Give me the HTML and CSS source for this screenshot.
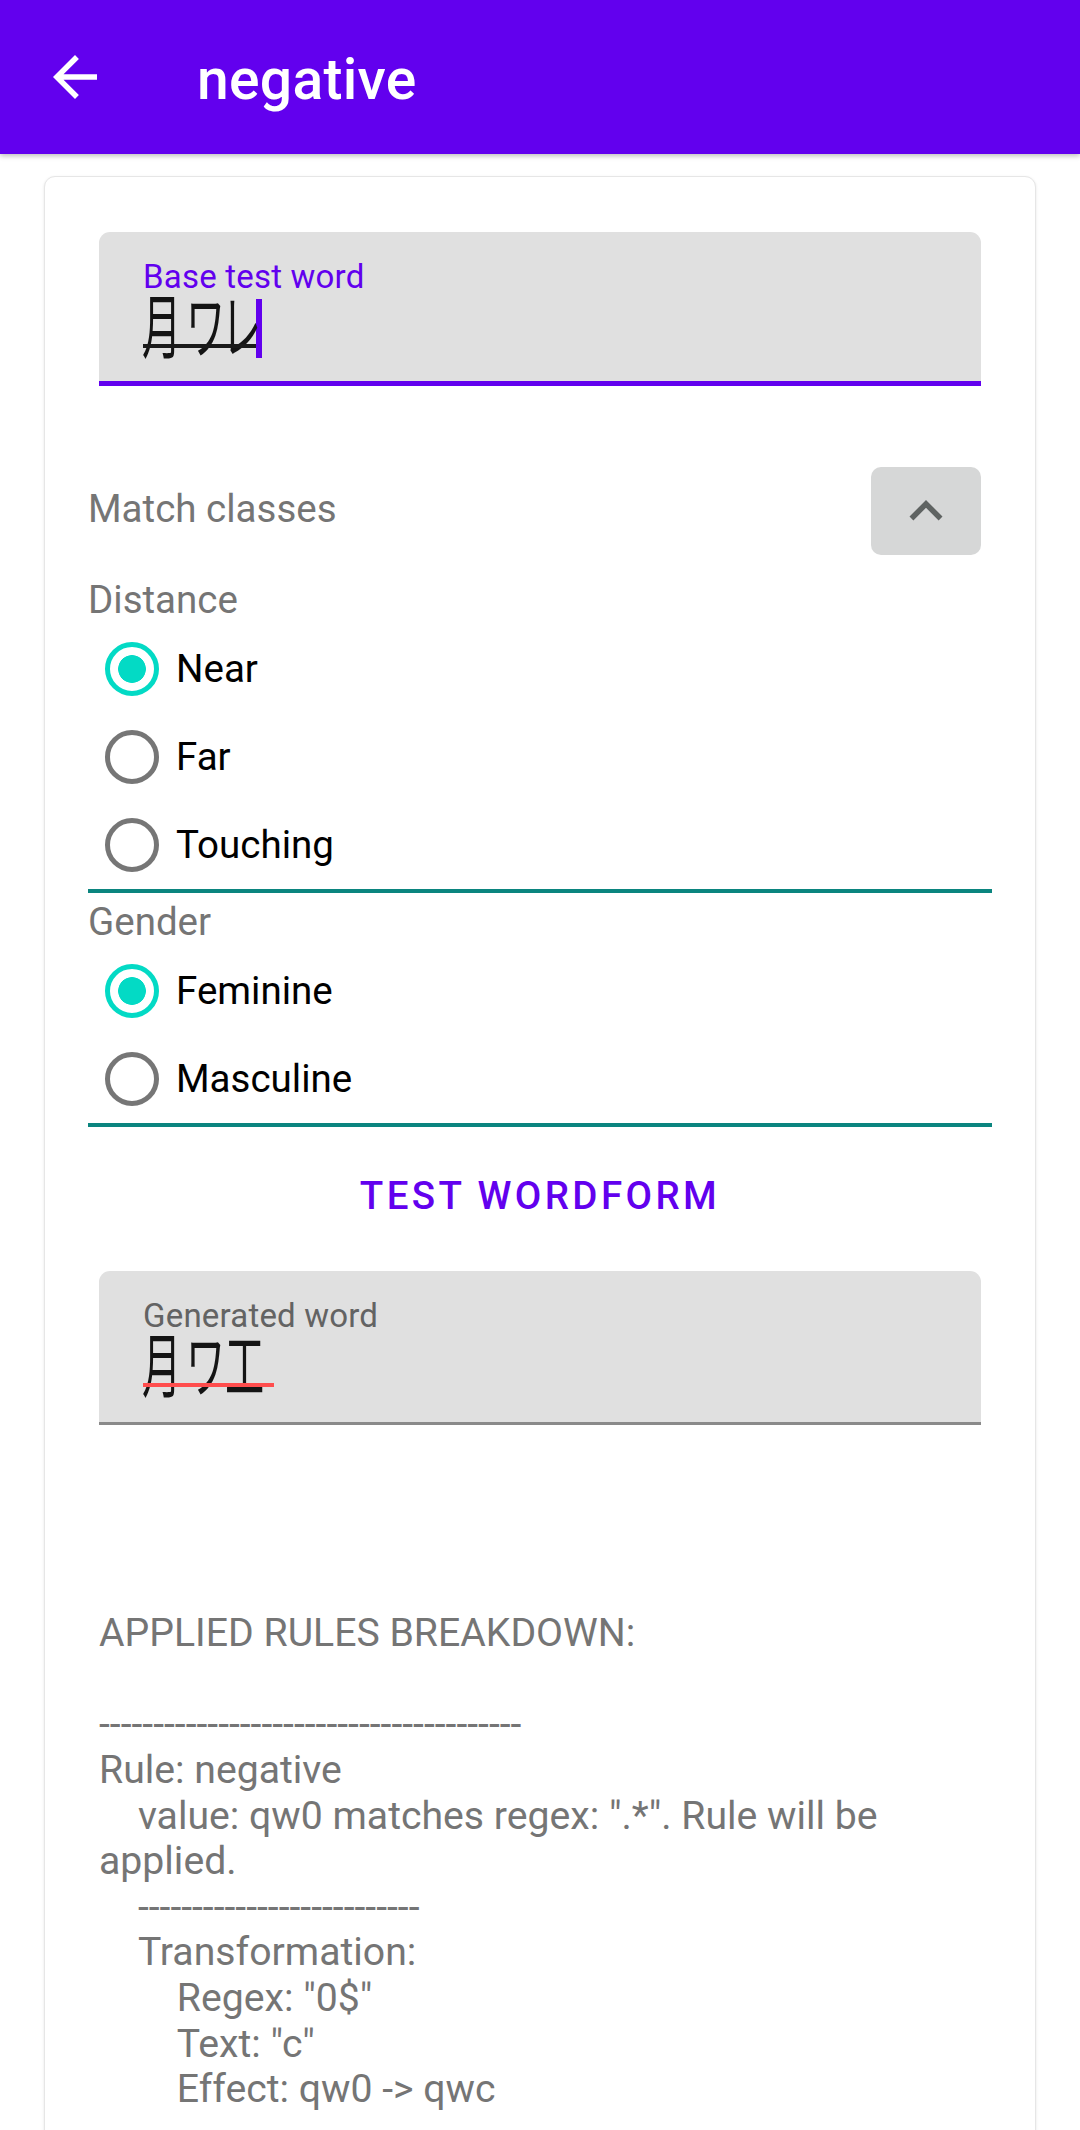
FILE: index.html
```html
<!DOCTYPE html>
<html lang="en">
<head>
<meta charset="utf-8">
<title>negative</title>
<link rel="stylesheet" href="styles.css">
</head>
<body>
<header class="appbar">
  <svg class="back" viewBox="0 0 24 24" aria-hidden="true"><path d="M20 11H7.83l5.59-5.59L12 4l-8 8 8 8 1.41-1.41L7.83 13H20v-2z"/></svg>
  <h1 class="title">negative</h1>
</header>

<main class="card">
  <div class="field field-focused">
    <div class="field-label">Base test word</div>
    <div class="field-value">
      <span class="word word-composing"><span class="g g1">月</span><span class="g g2">ワ</span><span class="g g3">レ</span></span><span class="cursor"></span>
    </div>
  </div>

  <div class="match-row">
    <span class="match-label">Match classes</span>
    <button class="expand" type="button" aria-label="Collapse"><svg viewBox="0 0 24 24"><path d="M12 8l-6 6 1.41 1.41L12 10.83l4.59 4.58L18 14z"/></svg></button>
  </div>

  <div class="group-label group-label-first">Distance</div>
  <div class="radio-group">
    <div class="radio checked"><span class="radio-circle"></span><span class="radio-text">Near</span></div>
    <div class="radio"><span class="radio-circle"></span><span class="radio-text">Far</span></div>
    <div class="radio"><span class="radio-circle"></span><span class="radio-text">Touching</span></div>
  </div>

  <div class="group-label">Gender</div>
  <div class="radio-group">
    <div class="radio checked"><span class="radio-circle"></span><span class="radio-text">Feminine</span></div>
    <div class="radio"><span class="radio-circle"></span><span class="radio-text">Masculine</span></div>
  </div>

  <button class="test-btn" type="button">TEST WORDFORM</button>

  <div class="field field-idle">
    <div class="field-label">Generated word</div>
    <div class="field-value">
      <span class="word word-misspelled"><span class="g g1">月</span><span class="g g2">ワ</span><span class="g g4">工</span></span>
    </div>
  </div>

  <div class="breakdown">APPLIED RULES BREAKDOWN:

---------------------------------------
Rule: negative
    value: qw0 matches regex: ".*". Rule will be applied.
    --------------------------
    Transformation:
        Regex: "0$"
        Text: "c"
        Effect: qw0 -&gt; qwc</div>
</main>
</body>
</html>
```

FILE: styles.css
```css
*, *::before, *::after {
  box-sizing: border-box;
}

html, body {
  margin: 0;
  background: #ffffff;
}

body {
  font-family: Roboto, "Noto Sans", "Liberation Sans", sans-serif;
  overflow: hidden;
}

/* ---------- app bar ---------- */
.appbar {
  position: relative;
  z-index: 1;
  height: 154px;
  background: #6200ee;
  display: flex;
  align-items: center;
  padding-top: 5px;
  padding-left: 42px;
  box-shadow: 0 2px 5px rgba(0, 0, 0, 0.26);
}

.back {
  width: 66px;
  height: 66px;
  fill: #ffffff;
  flex: none;
  margin-top: -5px;
}

.title {
  margin: 0 0 0 89px;
  font-size: 57px;
  font-weight: 500;
  color: #ffffff;
  letter-spacing: 0.3px;
}

/* ---------- card ---------- */
.card {
  display: block;
  margin: 22px 44px 0;
  padding: 44px 43px 240px;
  background: #ffffff;
  border: 1px solid #e6e6e6;
  border-radius: 11px;
  box-shadow: 0 1px 3px rgba(0, 0, 0, 0.10);
}

/* ---------- text fields ---------- */
.field {
  margin: 11px 11px 0;
  height: 154px;
  padding: 26px 44px 0;
  background: #e0e0e0;
  border-radius: 11px 11px 0 0;
}

.field-focused {
  border-bottom: 5.5px solid #6200ee;
}

.field-idle {
  margin-top: 53px;
  border-bottom: 3px solid #8a8a8a;
}

.field-label {
  font-size: 33px;
  line-height: 38.7px;
  color: #6200ee;
  letter-spacing: 0.2px;
}

.field-idle .field-label {
  color: #636363;
}

.field-value {
  display: flex;
  align-items: flex-start;
  height: 60px;
  margin-top: 1px;
}

.word {
  position: relative;
  display: flex;
  align-items: flex-start;
  height: 60px;
}

.word::after {
  content: "";
  position: absolute;
  left: 0;
  right: 0;
  top: 46px;
  height: 4px;
}

.word-composing::after {
  background: #1a1a1a;
}

.word-misspelled::after {
  background: #ff4d4d;
}

.g {
  display: inline-block;
  font-family: "Noto Sans CJK JP", "Noto Sans CJK SC", sans-serif;
  font-size: 70px;
  line-height: 50px;
  color: #141414;
  transform: scaleX(0.56);
  transform-origin: 0 50%;
  text-indent: -2px;
  white-space: nowrap;
}

.g1 { width: 44px; }
.g2 { width: 38px; }
.g3 { width: 31px; text-indent: -6px; }
.g4 { width: 49px; text-indent: 0; }

.cursor {
  width: 5.5px;
  height: 59px;
  margin-top: 1px;
  background: #6200ee;
}

/* ---------- match classes row ---------- */
.match-row {
  display: flex;
  align-items: center;
  justify-content: space-between;
  height: 88px;
  margin: 81px 11px 0 0;
}

.match-label {
  font-size: 38.5px;
  color: #757575;
  margin-bottom: 5px;
}

.expand {
  width: 110px;
  height: 88px;
  padding: 0;
  border: none;
  border-radius: 10px;
  background: #d6d7d7;
  display: flex;
  align-items: center;
  justify-content: center;
}

.expand svg {
  width: 66px;
  height: 66px;
  fill: #5f6362;
}

/* ---------- radio groups ---------- */
.group-label {
  margin-top: 6px;
  font-size: 38.5px;
  line-height: 45.1px;
  color: #757575;
}

.group-label-first {
  margin-top: 22px;
}

.radio-group {
  margin-top: 3px;
  border-bottom: 4px solid #0b857f;
}

.radio {
  display: flex;
  align-items: center;
  height: 88px;
}

.radio-circle {
  width: 88px;
  height: 88px;
  flex: none;
  display: flex;
  align-items: center;
  justify-content: center;
}

.radio-circle::before {
  content: "";
  width: 54px;
  height: 54px;
  border: 5.5px solid #767676;
  border-radius: 50%;
}

.checked .radio-circle::before {
  border-color: #03dac5;
  background: radial-gradient(circle at center, #03dac5 0 13.5px, transparent 14.2px);
}

.radio-text {
  font-size: 38.5px;
  color: #000000;
  margin-top: -2px;
}

/* ---------- test button ---------- */
.test-btn {
  display: block;
  margin: 46px auto 0;
  padding: 0;
  border: none;
  background: transparent;
  font-family: Roboto, "Noto Sans", sans-serif;
  font-size: 38.5px;
  line-height: 45.1px;
  font-weight: 500;
  letter-spacing: 3.4px;
  color: #6200ee;
}

/* ---------- breakdown ---------- */
.breakdown {
  margin: 186px 11px 0;
  white-space: pre-wrap;
  font-size: 39.2px;
  line-height: 45.6px;
  color: #757575;
}
```
